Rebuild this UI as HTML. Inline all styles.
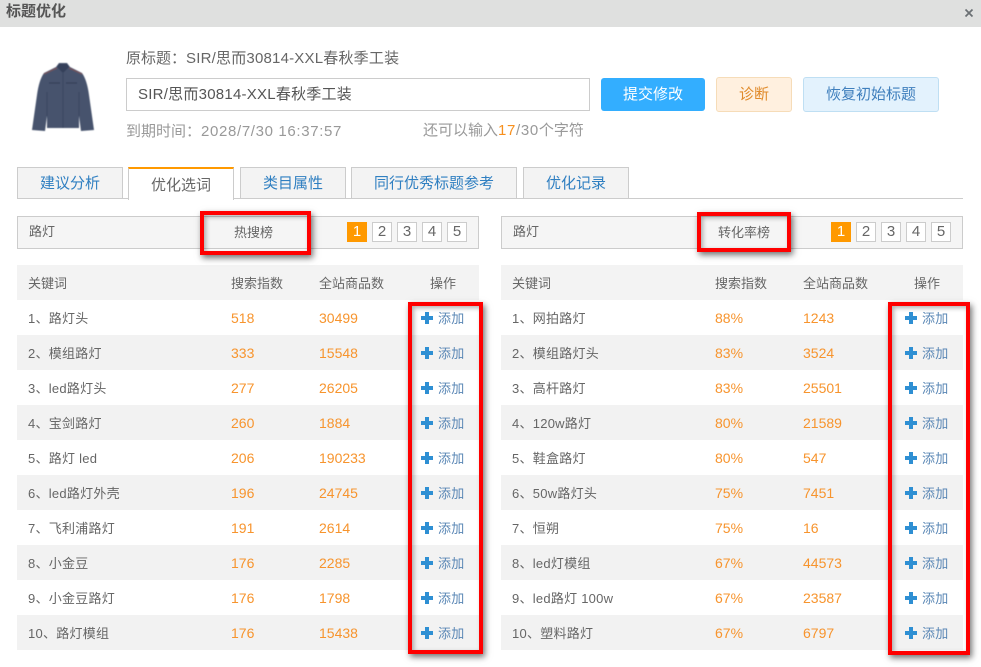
<!DOCTYPE html>
<html lang="zh">
<head>
<meta charset="utf-8">
<title>标题优化</title>
<style>
html,body{margin:0;padding:0;background:#fff}
body{position:relative;width:981px;height:667px;overflow:hidden;font-family:"Liberation Sans","Noto Sans CJK SC",sans-serif;font-size:15px;color:#666}
div,span,svg{position:absolute;box-sizing:border-box;white-space:nowrap}
span.s{position:static}
.l{letter-spacing:.65px}
.c{font-family:"Noto Sans CJK TC",sans-serif}
.t{line-height:20px;height:20px}
.n{font-size:13px}
.tab{top:167px;height:32px;line-height:32px;text-align:center;background:#f3f3f3;border:1px solid #ccc;border-bottom:1px solid #ccc;color:#2f7fc1}
.tab.on{background:#fff;border-top:2px solid #f90;border-bottom:0;color:#666;line-height:34px}
.bar{top:216px;width:462px;height:33px;background:#f5f5f5;border:1px solid #ccc}
.pg{top:222px;width:20px;height:20px;line-height:18px;text-align:center;background:#fff;border:1px solid #ccc;color:#666;font-size:15px}
.pg.on{background:#f90;border-color:#f90;color:#fff}
.tb{top:265px;width:462px;height:387px;font-size:13px}
.hd{left:0;top:0;width:462px;height:35px;background:#f3f3f3}
.r{left:0;width:462px;height:35px;line-height:35px}
.r.g{background:#f2f2f2}
.r span,.hd span{top:1px;line-height:35px}
.hd span{color:#666}
.k{left:11px}.r .k{letter-spacing:.25px}.a{left:214px;color:#f7942d;font-size:14px}.b{left:302px;color:#f7942d;font-size:14px}
.p{left:404px;top:12px!important;width:12px;height:12px}
.p:before{content:"";position:absolute;left:4px;top:0;width:4px;height:12px;background:#2e8fd3}
.p:after{content:"";position:absolute;left:0;top:4px;width:12px;height:4px;background:#2e8fd3}
.d{left:421px;color:#5a87b5;letter-spacing:.25px}
.red{border:4px solid #f00;box-shadow:2px 3px 6px rgba(0,0,0,.55),inset 2px 2px 5px rgba(0,0,0,.3);background:transparent}
</style>
</head>
<body>
<div style="left:0;top:0;width:981px;height:27px;background:#dfe0df"></div>
<div class="t" style="left:6px;top:2px;font-weight:bold;color:#555">标题优化</div>
<svg style="left:964px;top:8px" width="10" height="10" viewBox="0 0 10 10"><path d="M1.500 1.500L8.500 8.500M8.500 1.500L1.500 8.500" stroke="#6a6f73" stroke-width="1.700" fill="none"/></svg>

<svg style="left:20px;top:50px" width="80" height="90" viewBox="0 0 80 90">
<defs><filter id="bl" x="-10%" y="-10%" width="120%" height="120%"><feGaussianBlur stdDeviation=".6"/></filter></defs>
<g filter="url(#bl)">
<path d="M36 17L39 13H47L50 17L62 23Q67 30 69 45L74 80L61 81L59 66L59 78L27 78L27 66L25 81L12 80L17 45Q19 30 24 23Z" fill="#46536d"/>
<path d="M24 24L37 18M49 18L62 24" stroke="#7a5358" stroke-width="1" fill="none"/>
<path d="M37 17L43 23L49 17L47 14H39Z" fill="#36415a"/>
<path d="M43 23V78M27 42V66M59 42V66" stroke="#38435b" stroke-width=".8"/>
<path d="M29 33H40M46 33H57" stroke="#36415a" stroke-width="1.200"/>
</g>
</svg>

<div class="t" style="left:126px;top:48px;color:#666">原标题<span class="s c">：</span><span class="s" style="letter-spacing:.2px">SIR/思而30814-XXL春秋季工装</span></div>
<div style="left:126px;top:78px;width:464px;height:33px;border:1px solid #ccc;background:#fff"></div>
<div class="t" style="left:138px;top:85px;color:#555;letter-spacing:.24px">SIR/思而30814-XXL春秋季工装</div>
<div class="t" style="left:126px;top:121px;color:#999">到期时间<span class="s c">：</span><span class="s l">2028/7/30 16:37:57</span></div>
<div class="t" style="left:423px;top:121px;color:#999">还可以输入<span class="s l" style="color:#f7901e">17</span><span class="s l">/30</span>个字符</div>

<div style="left:601px;top:78px;width:104px;height:33px;line-height:33px;text-align:center;background:#33aeff;border-radius:3px;color:#fff">提交修改</div>
<div style="left:716px;top:77px;width:76px;height:35px;line-height:33px;text-align:center;background:#fff0df;border:1px solid #f6dcb8;border-radius:3px;color:#e08a2a">诊断</div>
<div style="left:803px;top:77px;width:136px;height:35px;line-height:33px;text-align:center;background:#e3f2fd;border:1px solid #bfdff3;border-radius:3px;color:#3f7fbd">恢复初始标题</div>

<div style="left:17px;top:198px;width:946px;height:1px;background:#ccc"></div>
<div class="tab" style="left:17px;width:106px">建议分析</div>
<div class="tab on" style="left:128px;width:106px;height:33px">优化选词</div>
<div class="tab" style="left:240px;width:106px">类目属性</div>
<div class="tab" style="left:351px;width:166px">同行优秀标题参考</div>
<div class="tab" style="left:523px;width:106px">优化记录</div>

<div class="bar" style="left:17px"></div>
<div class="t n" style="left:29px;top:222px">路灯</div>
<div class="t n" style="left:234px;top:223px">热搜榜</div>
<div class="pg on" style="left:347px">1</div><div class="pg" style="left:372px">2</div><div class="pg" style="left:397px">3</div><div class="pg" style="left:422px">4</div><div class="pg" style="left:447px">5</div>

<div class="bar" style="left:501px"></div>
<div class="t n" style="left:513px;top:222px">路灯</div>
<div class="t n" style="left:718px;top:223px">转化率榜</div>
<div class="pg on" style="left:831px">1</div><div class="pg" style="left:856px">2</div><div class="pg" style="left:881px">3</div><div class="pg" style="left:906px">4</div><div class="pg" style="left:931px">5</div>

<div class="tb" style="left:17px">
<div class="hd"><span class="k">关键词</span><span style="left:214px">搜索指数</span><span style="left:302px">全站商品数</span><span style="left:413px">操作</span></div>
<div class="r" style="top:35px"><span class="k">1、路灯头</span><span class="a">518</span><span class="b">30499</span><span class="p"></span><span class="d">添加</span></div>
<div class="r g" style="top:70px"><span class="k">2、模组路灯</span><span class="a">333</span><span class="b">15548</span><span class="p"></span><span class="d">添加</span></div>
<div class="r" style="top:105px"><span class="k">3、led路灯头</span><span class="a">277</span><span class="b">26205</span><span class="p"></span><span class="d">添加</span></div>
<div class="r g" style="top:140px"><span class="k">4、宝剑路灯</span><span class="a">260</span><span class="b">1884</span><span class="p"></span><span class="d">添加</span></div>
<div class="r" style="top:175px"><span class="k">5、路灯 led</span><span class="a">206</span><span class="b">190233</span><span class="p"></span><span class="d">添加</span></div>
<div class="r g" style="top:210px"><span class="k">6、led路灯外壳</span><span class="a">196</span><span class="b">24745</span><span class="p"></span><span class="d">添加</span></div>
<div class="r" style="top:245px"><span class="k">7、飞利浦路灯</span><span class="a">191</span><span class="b">2614</span><span class="p"></span><span class="d">添加</span></div>
<div class="r g" style="top:280px"><span class="k">8、小金豆</span><span class="a">176</span><span class="b">2285</span><span class="p"></span><span class="d">添加</span></div>
<div class="r" style="top:315px"><span class="k">9、小金豆路灯</span><span class="a">176</span><span class="b">1798</span><span class="p"></span><span class="d">添加</span></div>
<div class="r g" style="top:350px"><span class="k">10、路灯模组</span><span class="a">176</span><span class="b">15438</span><span class="p"></span><span class="d">添加</span></div>
</div>

<div class="tb" style="left:501px">
<div class="hd"><span class="k">关键词</span><span style="left:214px">搜索指数</span><span style="left:302px">全站商品数</span><span style="left:413px">操作</span></div>
<div class="r" style="top:35px"><span class="k">1、网拍路灯</span><span class="a">88%</span><span class="b">1243</span><span class="p"></span><span class="d">添加</span></div>
<div class="r g" style="top:70px"><span class="k">2、模组路灯头</span><span class="a">83%</span><span class="b">3524</span><span class="p"></span><span class="d">添加</span></div>
<div class="r" style="top:105px"><span class="k">3、高杆路灯</span><span class="a">83%</span><span class="b">25501</span><span class="p"></span><span class="d">添加</span></div>
<div class="r g" style="top:140px"><span class="k">4、120w路灯</span><span class="a">80%</span><span class="b">21589</span><span class="p"></span><span class="d">添加</span></div>
<div class="r" style="top:175px"><span class="k">5、鞋盒路灯</span><span class="a">80%</span><span class="b">547</span><span class="p"></span><span class="d">添加</span></div>
<div class="r g" style="top:210px"><span class="k">6、50w路灯头</span><span class="a">75%</span><span class="b">7451</span><span class="p"></span><span class="d">添加</span></div>
<div class="r" style="top:245px"><span class="k">7、恒朔</span><span class="a">75%</span><span class="b">16</span><span class="p"></span><span class="d">添加</span></div>
<div class="r g" style="top:280px"><span class="k">8、led灯模组</span><span class="a">67%</span><span class="b">44573</span><span class="p"></span><span class="d">添加</span></div>
<div class="r" style="top:315px"><span class="k">9、led路灯 100w</span><span class="a">67%</span><span class="b">23587</span><span class="p"></span><span class="d">添加</span></div>
<div class="r g" style="top:350px"><span class="k">10、塑料路灯</span><span class="a">67%</span><span class="b">6797</span><span class="p"></span><span class="d">添加</span></div>
</div>

<div class="red" style="left:200px;top:211px;width:111px;height:44px"></div>
<div class="red" style="left:697px;top:212px;width:94px;height:40px"></div>
<div class="red" style="left:408px;top:302px;width:75px;height:352px"></div>
<div class="red" style="left:888px;top:302px;width:82px;height:353px"></div>
</body>
</html>
